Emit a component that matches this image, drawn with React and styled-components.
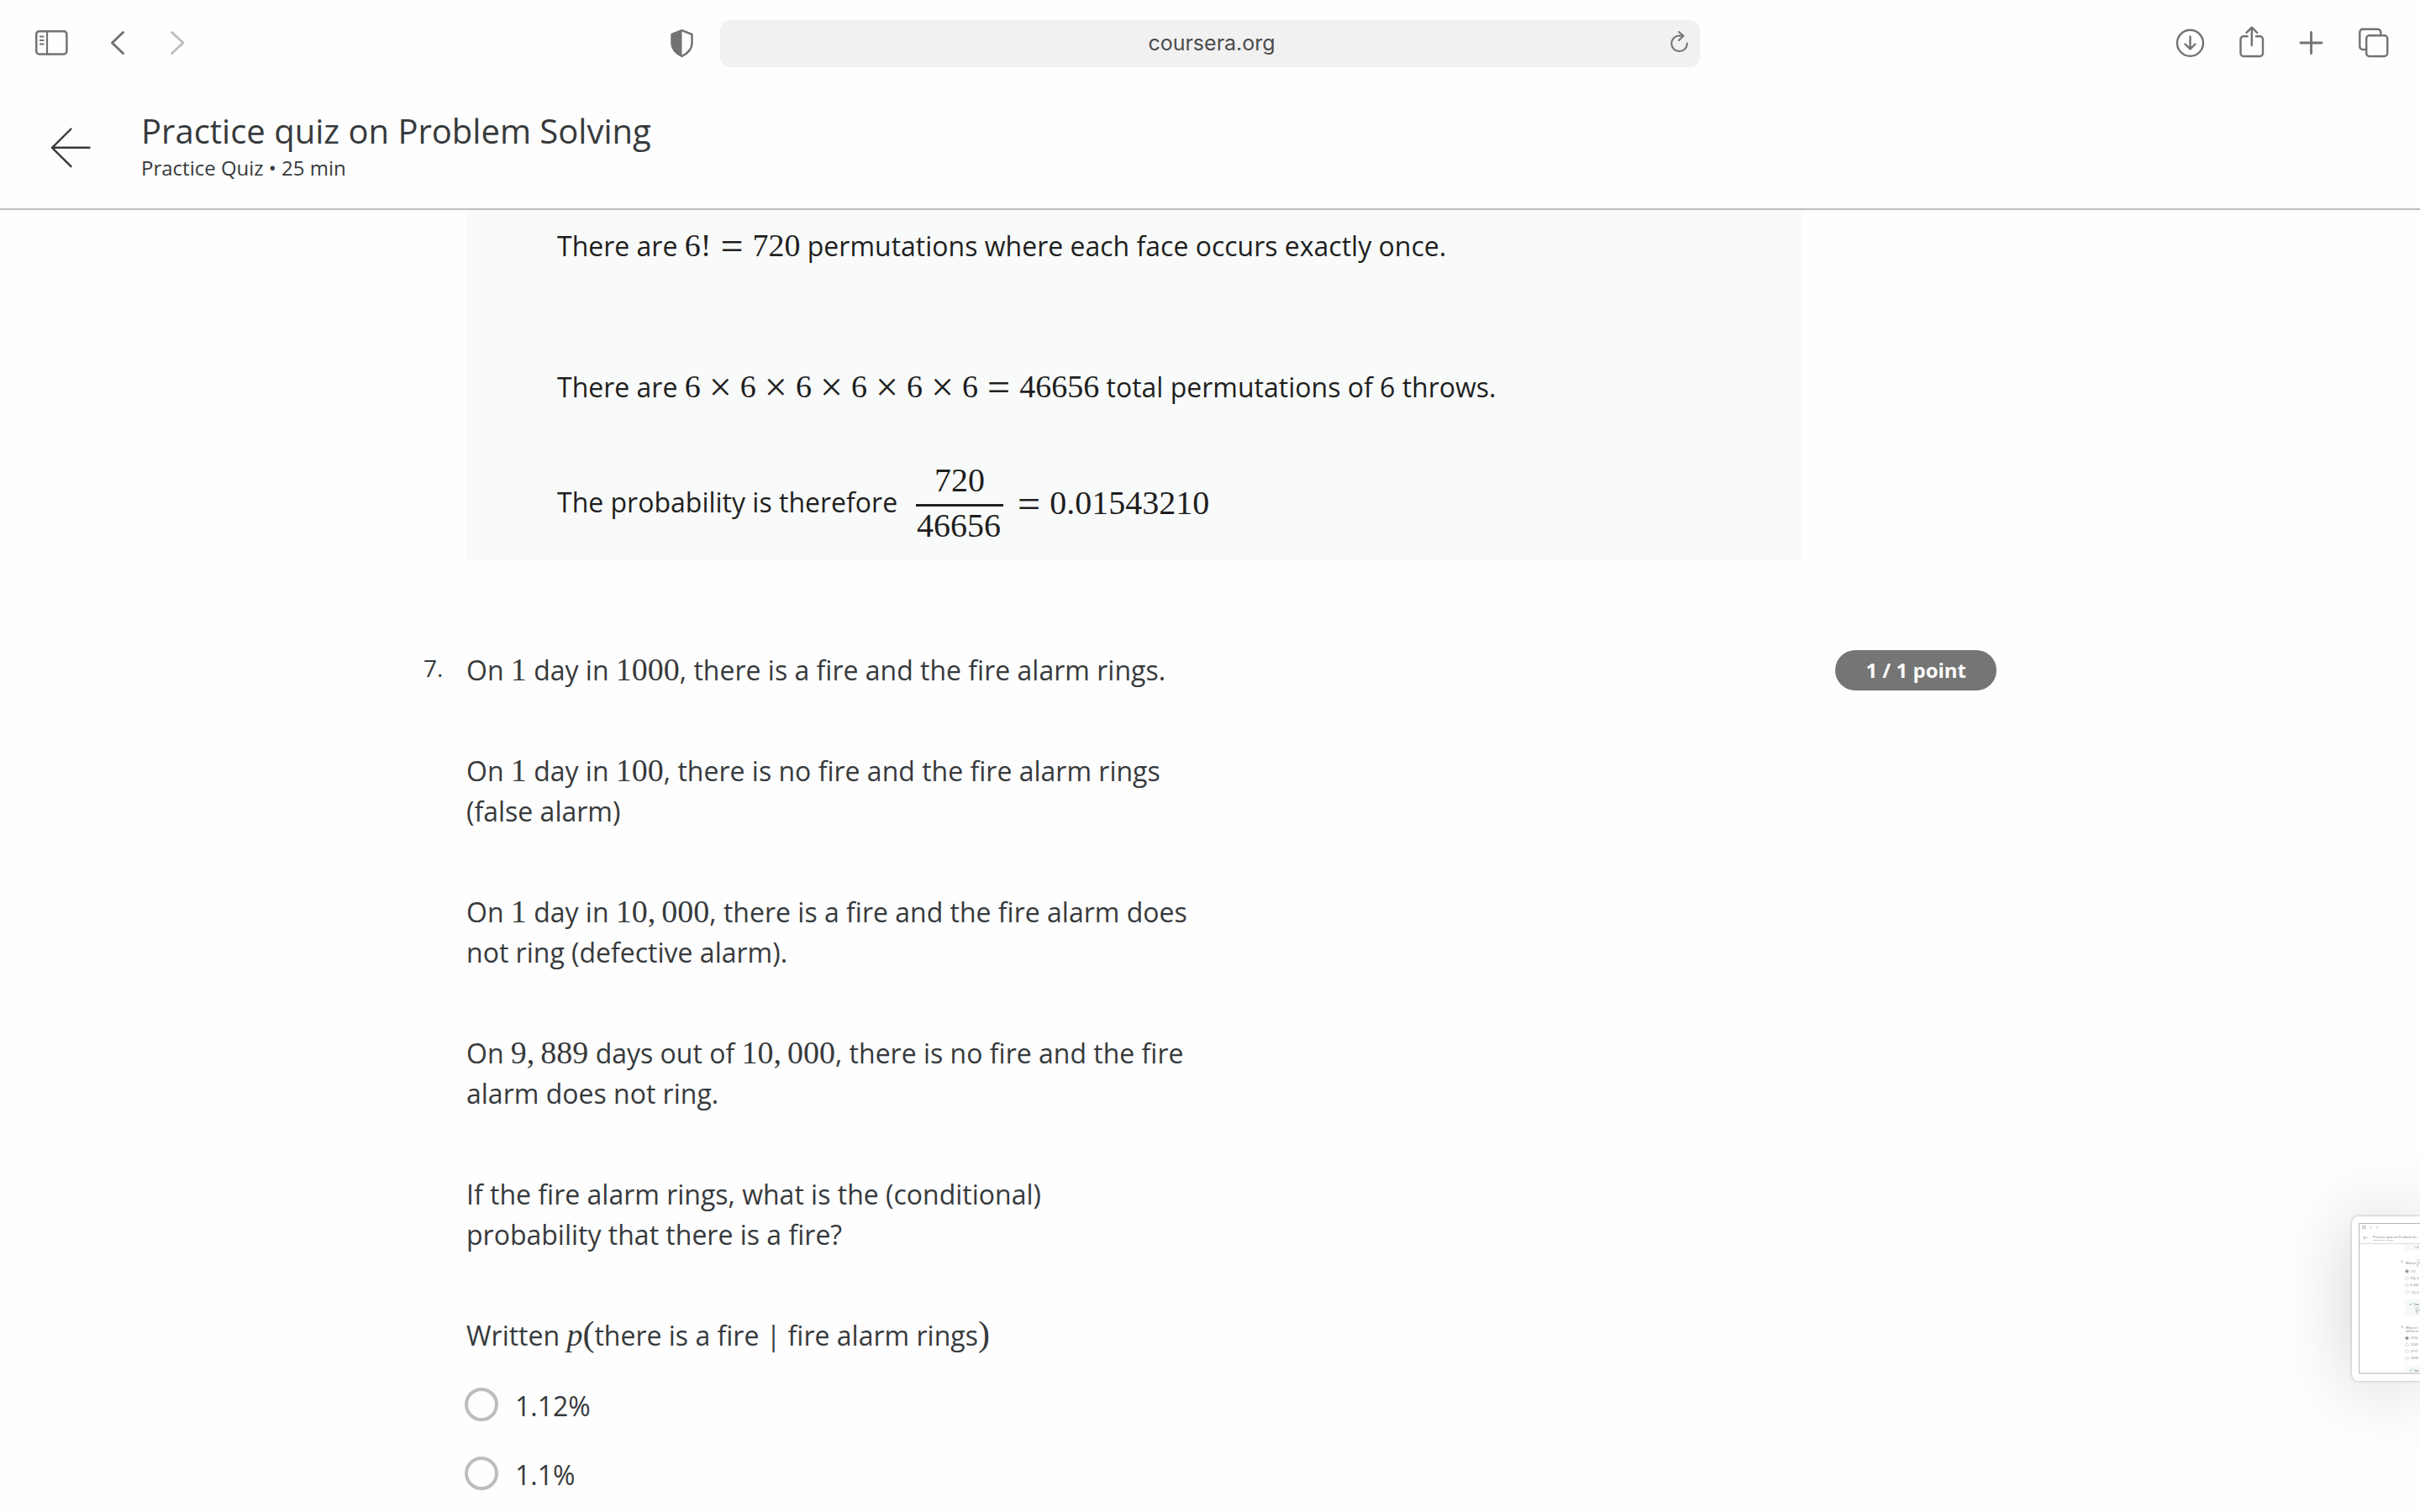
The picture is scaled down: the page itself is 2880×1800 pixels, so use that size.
import React from "react";
import styled, { createGlobalStyle } from "styled-components";

const SANS = '"Open Sans", "Noto Sans", sans-serif';
const MATH = '"Liberation Serif", "Times New Roman", serif';

const GlobalStyle = createGlobalStyle`
  * { box-sizing: border-box; }
  html, body, #root { height: 100%; }
  body { margin: 0; background: #fefefe; color: #373a3c; font-family: ${SANS}; }
  h1, p { margin: 0; }
`;

const Page = styled.div`
  position: relative;
  display: flex;
  flex-direction: column;
  height: 100%;
  overflow: hidden;
`;

const Toolbar = styled.nav`
  display: grid;
  grid-template-columns: 1fr minmax(0, 1166px) 1fr;
  align-items: center;
  padding: 24px 36px 0;
`;

const ToolGroup = styled.div`
  display: flex;
  align-items: center;
  gap: ${(p) => p.$gap || 0}px;
  justify-content: ${(p) => p.$justify || "flex-start"};
`;

const IconButton = styled.button`
  display: flex;
  padding: 0;
  border: 0;
  background: none;
  color: ${(p) => p.$color || "#727272"};
`;

const PrivacyButton = styled(IconButton)`
  margin: 0 31px 0 auto;
`;

const AddressBar = styled.div`
  display: grid;
  grid-template-columns: 24px 1fr 24px;
  align-items: center;
  height: 56px;
  padding: 0 12px;
  border-radius: 12px;
  background: #f1f1f1;
`;

const AddressInput = styled.input`
  grid-column: 2;
  width: 100%;
  padding: 0 0 2px 4px;
  border: 0;
  background: none;
  color: #4c4c4c;
  font: 25px/32px Inter, "Liberation Sans", sans-serif;
  text-align: center;
`;

const Header = styled.header`
  display: flex;
  align-items: center;
  gap: 56px;
  padding: 50px 56px 30px;
  border-bottom: 2px solid #bdbdbd;
`;

const Title = styled.h1`
  font-size: 40px;
  line-height: 52px;
  font-weight: 400;
`;

const Subtitle = styled.p`
  font-size: 24px;
  line-height: 36px;
`;

const Content = styled.main`
  width: 100%;
  max-width: 1872px;
  margin: 0 auto;
  font-size: 32px;
  line-height: 48px;
`;

const Feedback = styled.section`
  display: flex;
  flex-direction: column;
  margin: 0 231px 0 51px;
  padding: 19px 108px 19px;
  background: #f9fbfa;
  color: #1f1f1f;
`;

const FeedbackText = styled.p`
  padding-bottom: ${(p) => p.$space || 0}px;
`;

const Equation = styled.p`
  display: flex;
  align-items: center;
`;

const Math = styled.span`
  font-family: ${MATH};
  font-size: 38px;
  line-height: 40px;
  font-style: ${(p) => (p.$italic ? "italic" : "normal")};
  white-space: nowrap;
`;

const Separator = styled.span`
  margin-right: 7px;
`;

const Op = styled.span`
  margin: 0 ${(p) => p.$space || 11}px;
  font-size: 48px;
  line-height: 0;
  vertical-align: -4px;
`;

const Times = () => <Op $space={10}>×</Op>;

const Bracket = styled.span`
  font-family: ${MATH};
  font-size: 42px;
  line-height: 40px;
`;

const Fraction = styled.span`
  display: inline-flex;
  flex-direction: column;
  align-items: center;
  margin: 0 6px 0 22px;
  font-family: ${MATH};
  font-size: 40px;
`;

const Numerator = styled.span`
  align-self: stretch;
  padding-bottom: 3px;
  border-bottom: 3px solid #1f1f1f;
  line-height: 50px;
  text-align: center;
`;

const Denominator = styled.span`
  padding: 0 3px 0 1px;
  line-height: 46px;
`;

const Result = styled.span`
  padding-top: 2px;
  font-family: ${MATH};
  font-size: 40px;
  line-height: 50px;
`;

const Question = styled.section`
  display: grid;
  grid-template-columns: 51px 1fr auto;
  align-items: start;
  padding-top: 106px;
`;

const Number = styled.span`
  font-size: 28px;
  line-height: 43px;
`;

const Prompt = styled.div`
  display: flex;
  flex-direction: column;
  gap: 72px;
  max-width: 872px;
`;

const Points = styled.span`
  padding: 0 36px;
  border-radius: 24px;
  background: #757575;
  color: #fff;
  font-size: 24px;
  line-height: 48px;
  font-weight: 700;
`;

const Options = styled.div`
  display: flex;
  flex-direction: column;
  gap: 34px;
  margin-left: -2px;
  padding-top: 36px;
`;

const Option = styled.label`
  display: flex;
  align-items: center;
  gap: 20px;
`;

const Radio = styled.input`
  appearance: none;
  width: 40px;
  height: 40px;
  margin: 0 0 4px;
  border: 4px solid #bdbdbd;
  border-radius: 50%;
`;

const Preview = styled.aside`
  position: absolute;
  right: 0;
  bottom: 156px;
  width: 81px;
  height: 196px;
  padding: 8px 0 8px 8px;
  border-radius: 8px 0 0 8px;
  background: #fff;
  box-shadow: 0 0 3px rgba(0, 0, 0, 0.3), 0 4px 88px rgba(0, 0, 0, 0.18);
`;

const line = { fill: "none", stroke: "currentColor", strokeLinecap: "round", strokeLinejoin: "round" };

const SidebarIcon = () => (
  <svg width="46" height="34" viewBox="0 0 46 34" {...line} strokeWidth="2.5">
    <rect x="7.2" y="2.2" width="36.2" height="27.2" rx="3.5" />
    <path d="M20 2.500v27" strokeWidth="2.2" />
    <path d="M11.800 8.500h4M11.800 13h4M11.800 17.500h4" strokeWidth="1.8" />
  </svg>
);

const ChevronIcon = ({ flip }) => (
  <svg width="22" height="32" viewBox="0 0 22 32" {...line} strokeWidth="3">
    <path d={flip ? "M4.500 2.500l13.500 12.500L4.500 27.500" : "M16.500 2.500L3.500 15l13 12.500"} />
  </svg>
);

const ShieldIcon = () => (
  <svg width="30" height="36" viewBox="0 0 30 36">
    <path d="M15.500 2.200L27.500 7V18c0 7-5.500 11.500-12 15C9 29.500 3.500 25 3.500 18V7z" fill="none" stroke="currentColor" strokeWidth="2.5" strokeLinejoin="round" />
    <path d="M15.500 2.200v30.800C9 29.500 3.500 25 3.500 18V7z" fill="currentColor" />
  </svg>
);

const ReloadIcon = () => (
  <svg width="24" height="30" viewBox="0 0 24 30" {...line} strokeWidth="2">
    <path d="M16 5.800L11.500 5.500A9.300 9.300 0 1 0 20.800 14.500" />
    <path d="M11 1l5.500 4.800L11 11" />
  </svg>
);

const DownloadIcon = () => (
  <svg width="36" height="36" viewBox="0 0 36 36" {...line} strokeWidth="2.4">
    <circle cx="18.500" cy="17.300" r="15.500" />
    <path d="M18.500 9.500v14.500M12.500 18.500l6 5.800 6-5.800" />
  </svg>
);

const ShareIcon = () => (
  <svg width="32" height="42" viewBox="0 0 32 42" {...line} strokeWidth="2.4">
    <path d="M10.500 12.200H6a3.500 3.500 0 0 0-3.500 3.500v16.800A3.500 3.500 0 0 0 6 36h19.500a3.500 3.500 0 0 0 3.500-3.500V15.700a3.500 3.500 0 0 0-3.500-3.500H21" />
    <path d="M15.800 23V1.800M9.500 7.800l6.300-6.200 6.300 6.200" />
  </svg>
);

const PlusIcon = () => (
  <svg width="30" height="30" viewBox="0 0 30 30" {...line} strokeWidth="2.8">
    <path d="M14.500 1.500v25M2 14h25" />
  </svg>
);

const TabsIcon = () => (
  <svg width="38" height="38" viewBox="0 0 38 38" {...line} strokeWidth="2.4">
    <path d="M10 26H5.800A3.500 3.500 0 0 1 2.300 22.500V5.300A3.500 3.500 0 0 1 5.800 1.800h18a3.500 3.500 0 0 1 3.500 3.500V9" />
    <rect x="10.200" y="9.300" width="25" height="24.700" rx="3.500" />
  </svg>
);

const BackIcon = () => (
  <svg width="56" height="52" viewBox="0 0 56 52" {...line} strokeWidth="2.4">
    <path d="M28.500 5.500L6 27.800l22.500 22.400M6 27.800h44.500" />
  </svg>
);

const THUMB_OPTIONS = [
  [57.5, "110", true],
  [66, "554, 4"],
  [74, "4, 435"],
  [82.3, "110, 0"],
  [137, ".0154", true],
  [145, ".0143"],
  [153, ".0117"],
  [161, ".0018"],
];

const Thumbnail = () => (
  <svg width="73" height="180" viewBox="0 0 73 180" fill="none" fontFamily={SANS} fontSize="3.5">
    <path d="M55.500 25H73v8H55.500zM55.500 91H73v20H55.500zM55.500 170H73v9H55.500z" fill="#f6faf8" />
    <path d="M0 24.500H73" stroke="#dcdcdc" />
    <path d="M4.500 3.500h4v3.200h-4zM6 3.500v3.200M15 3.500L13.500 5.200 15 7M21 3.500l1.500 1.700L21 7M8 15l-2.500 2.500L8 20M5.500 17.500H11" stroke="#8c8c8c" strokeWidth=".5" />
    <g fill="#6e6e6e">
      <text x="17" y="17.500" fontSize="4">Practice quiz on Problem So</text>
      <text x="17" y="21" fontSize="2.4">Practice Quiz • 25 min</text>
      <text x="66" y="29.500">1.4</text>
      <text x="50.500" y="47">5.</text>
      <text x="56" y="49">What is</text>
      <text x="69" y="46">11</text>
      <text x="69" y="52">9</text>
      <text x="66" y="98" fontWeight="600">Cor</text>
      <text x="67" y="102.500">11</text>
      <text x="68" y="108">9</text>
      <text x="50.500" y="125">6.</text>
      <text x="56" y="125.500">What is t</text>
      <text x="56" y="130">will be ex</text>
      <text x="66" y="177" fontWeight="600">Cor</text>
      {THUMB_OPTIONS.map(([y, label]) => (
        <text key={label} x="61.500" y={y + 1.3}>{label}</text>
      ))}
    </g>
    <path d="M69 47.500h4M67.500 104h5.500" stroke="#6e6e6e" strokeWidth=".5" />
    {THUMB_OPTIONS.map(([y, label, checked]) => (
      <g key={label}>
        <circle cx="57.500" cy={y} r="1.9" stroke={checked ? "#7a7a7a" : "#b8b8b8"} strokeWidth=".5" />
        {checked && <circle cx="57.500" cy={y} r="1.200" fill="#6a6a6a" />}
      </g>
    ))}
    <path d="M60.500 96.500l1.200 1.300 2.300-3M60.500 175l1.200 1.300 2.300-3" stroke="#5fa98a" strokeWidth=".7" />
    <path d="M73 .5H.5v178.500H73" stroke="#b5b5b5" />
  </svg>
);

const TenThousand = () => <Math>10<Separator>,</Separator>000</Math>;

export default function App() {
  return (
    <Page>
      <GlobalStyle />
      <Toolbar>
        <ToolGroup $gap={48}>
          <IconButton aria-label="Sidebar"><SidebarIcon /></IconButton>
          <IconButton aria-label="Back"><ChevronIcon /></IconButton>
          <IconButton aria-label="Forward" $color="#bdbdbd"><ChevronIcon flip /></IconButton>
          <PrivacyButton aria-label="Privacy report"><ShieldIcon /></PrivacyButton>
        </ToolGroup>
        <AddressBar>
          <AddressInput aria-label="Address" defaultValue="coursera.org" />
          <IconButton aria-label="Reload"><ReloadIcon /></IconButton>
        </AddressBar>
        <ToolGroup $gap={40} $justify="flex-end">
          <IconButton aria-label="Downloads"><DownloadIcon /></IconButton>
          <IconButton aria-label="Share"><ShareIcon /></IconButton>
          <IconButton aria-label="New tab"><PlusIcon /></IconButton>
          <IconButton aria-label="Tabs"><TabsIcon /></IconButton>
        </ToolGroup>
      </Toolbar>
      <Header>
        <IconButton aria-label="Back to course" $color="#373a3c"><BackIcon /></IconButton>
        <div>
          <Title>Practice quiz on Problem Solving</Title>
          <Subtitle>Practice Quiz • 25 min</Subtitle>
        </div>
      </Header>
      <Content>
        <Feedback>
          <FeedbackText $space={120}>
            There are <Math>6!<Op>=</Op>720</Math> permutations where each face occurs exactly once.
          </FeedbackText>
          <FeedbackText $space={62}>
            There are{" "}
            <Math>
              6<Times />6<Times />6<Times />6<Times />6<Times />6<Op>=</Op>46656
            </Math>{" "}
            total permutations of 6 throws.
          </FeedbackText>
          <Equation>
            The probability is therefore
            <Fraction>
              <Numerator>720</Numerator>
              <Denominator>46656</Denominator>
            </Fraction>
            <Result><Op>=</Op>0.01543210</Result>
          </Equation>
        </Feedback>
        <Question>
          <Number>7.</Number>
          <div>
            <Prompt>
              <p>On <Math>1</Math> day in <Math>1000</Math>, there is a fire and the fire alarm rings.</p>
              <p>On <Math>1</Math> day in <Math>100</Math>, there is no fire and the fire alarm rings<br />(false alarm)</p>
              <p>On <Math>1</Math> day in <TenThousand />, there is a fire and the fire alarm does<br />not ring (defective alarm).</p>
              <p>On <Math>9<Separator>,</Separator>889</Math> days out of <TenThousand />, there is no fire and the fire<br />alarm does not ring.</p>
              <p>If the fire alarm rings, what is the (conditional)<br />probability that there is a fire?</p>
              <p>Written <Math $italic>p</Math><Bracket>(</Bracket>there is a fire | fire alarm rings<Bracket>)</Bracket></p>
            </Prompt>
            <Options>
              <Option><Radio type="radio" name="answer" />1.12%</Option>
              <Option><Radio type="radio" name="answer" />1.1%</Option>
            </Options>
          </div>
          <Points>1 / 1 point</Points>
        </Question>
      </Content>
      <Preview aria-label="Screenshot preview"><Thumbnail /></Preview>
    </Page>
  );
}
